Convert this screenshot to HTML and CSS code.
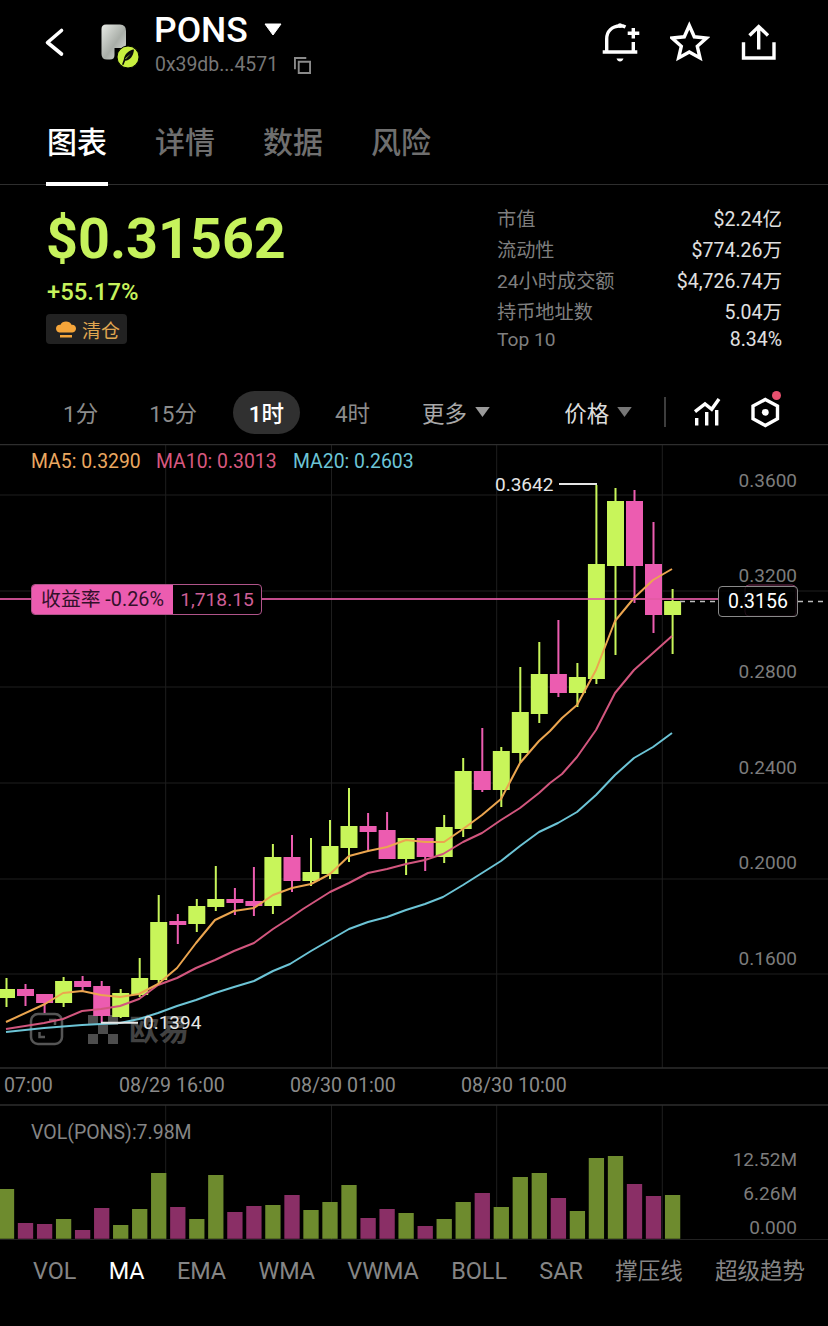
FILE: index.html
```html
<!DOCTYPE html>
<html lang="zh">
<head>
<meta charset="utf-8">
<title>PONS</title>
<link rel="stylesheet" href="styles.css">
</head>
<body>
<div class="app">
  <header class="topbar">
    <svg class="back" viewBox="40 24 28 36"><path d="M61.5 30.5L47.5 42.5L61.5 54"/></svg>
    <svg class="logo" viewBox="96 20 44 48">
      <defs><linearGradient id="lg" x1="0" y1="0" x2="1" y2="1"><stop offset="0" stop-color="#e8ebe6"/><stop offset=".55" stop-color="#a9aea8"/><stop offset="1" stop-color="#dfe2de"/></linearGradient></defs>
      <path class="logo-p" d="M106 24.500H120Q126 24.500 126 31V44Q126 48 122 48H114.500V55Q114.500 59.500 110 59.500H107Q101.500 59.500 101.500 54V29Q101.500 24.500 106 24.500Z"/>
      <circle class="logo-badge" cx="128" cy="57" r="11"/>
      <path class="logo-feather" d="M134 49.500C129 50 124.500 54 123.800 59.500L122 64.500L123.500 65L125.200 60.800C130 60.500 133.500 56 134 49.500ZM131 53.500L125.800 59L125.200 58.400Z"/>
    </svg>
    <div class="title">
      <div class="title-row"><span class="name">PONS</span><svg class="caret" viewBox="0 0 18 13"><path d="M1 1H17L9 12Z"/></svg></div>
      <div class="addr-row"><span class="addr">0x39db...4571</span>
        <svg class="copy" viewBox="0 0 18 18"><path d="M1 13V1H13M5 5H17V17H5Z"/></svg></div>
    </div>
    <div class="actions">
      <svg class="ico" viewBox="600 20 40 44"><path d="M606.700 52V39C606.700 31 612 26.500 620 25.800Q623 25.800 625.500 27M633.300 42V52M602.700 52H637.300M627.700 33.300H639.300M633.300 28V38.500"/><path class="fill" d="M616.500 58.500H623.500Q622.500 61.500 620 61.500Q617.500 61.500 616.500 58.500Z"/><circle class="fill" cx="620" cy="25.500" r="2.200"/></svg>
      <svg class="ico" viewBox="670 20 40 44"><path d="M689.300 25.500L694.300 36.800L706.500 38L697.300 46.300L700 58L689.300 52L678.600 58L681.300 46.300L672.100 38L684.300 36.800Z"/></svg>
      <svg class="ico" viewBox="740 20 40 44"><path d="M743.500 42.300V58H774V42.300M758.700 27V49.500M749.500 35.500L758.700 26.500L768 35.500"/></svg>
    </div>
  </header>

  <nav class="tabs">
    <a class="tab on">图表</a><a class="tab">详情</a><a class="tab">数据</a><a class="tab">风险</a>
  </nav>

  <section class="summary">
    <div class="price-col">
      <div class="price">$0.31562</div>
      <div class="chg">+55.17%</div>
      <div class="badge">
        <svg class="hat" viewBox="0 0 20 17"><path class="hat-top" d="M3.500 11.500C1 11 0 9 0 7.500C0 5 2 3.500 4.500 3.800C5.500 1.500 7.500 0.500 10 0.500C12.500 0.500 14.500 1.500 15.500 3.800C18 3.500 20 5 20 7.500C20 9 19 11 16.500 11.500Z"/><rect class="hat-top" x="4" y="14" width="12" height="2.500"/></svg>
        <span>清仓</span>
      </div>
    </div>
    <dl class="stats">
      <div class="stat"><dt>市值</dt><dd>$2.24亿</dd></div>
      <div class="stat"><dt>流动性</dt><dd>$774.26万</dd></div>
      <div class="stat"><dt>24小时成交额</dt><dd>$4,726.74万</dd></div>
      <div class="stat"><dt>持币地址数</dt><dd>5.04万</dd></div>
      <div class="stat last"><dt>Top 10</dt><dd>8.34%</dd></div>
    </dl>
  </section>

  <div class="periods">
    <span class="per p1">1分</span><span class="per p2">15分</span><span class="per pill">1时</span><span class="per p4">4时</span>
    <span class="per more">更多<svg class="tri" viewBox="0 0 16 11"><path d="M0 0H16L8 11Z"/></svg></span>
    <span class="per kind">价格<svg class="tri dim" viewBox="0 0 16 11"><path d="M0 0H16L8 11Z"/></svg></span>
    <i class="divider"></i>
    <svg class="tool t1" viewBox="692 396 30 32"><path d="M695 411.700L705 404L711.700 409.300L719 399M696.700 418V425.500M706.700 412V425.500M716.700 410V425.500"/></svg>
    <span class="hexwrap">
      <svg class="tool t2" viewBox="748 396 33 33"><path d="M764.300 399.500L776.500 406V418.700L764.300 425.500L752 418.700V406Z"/><circle class="fill" cx="764.300" cy="412.300" r="3.400"/></svg>
      <i class="dot"></i>
    </span>
  </div>

  <section class="chart">
    <svg class="plot" viewBox="0 444 828 796">
      <path class="grid" d="M0 495H828M0 591H828M0 687H828M0 783H828M0 879H828M0 974H828M165.700 444V1068M331.500 444V1068M496.700 444V1068M662.300 444V1068M165.700 1105V1240M331.500 1105V1240M496.700 1105V1240M662.300 1105V1240"/>
      <path class="rule" d="M0 444.500H828M0 1068H828M0 1105H828M0 1240H828"/>

      <g class="mark">
        <rect class="wm-box" x="31" y="1014" width="31" height="30" rx="7"/>
        <path class="wm-line" d="M39.500 1032V1037H45M49 1020H55V1025"/>
        <path class="wm-fill" d="M88 1015h10v10h-10zM108 1015h10v10h-10zM98 1024h10v10h-10zM88 1034h10v10h-10zM108 1034h10v10h-10z"/>
        <text class="wm-text" x="129" y="1040">欧易</text>
      </g>

      <path class="wick up" d="M6.500 978V1007M63.600 977V1007M120.700 989V1018M139.700 958V997M158.700 895V985M196.800 899V932M215.800 866V911M272.900 844V914M311 838V886M330 820V879M349 788V862M406.100 838V875M444.200 815V863M463.200 758V837M501.300 747V807M520.300 667V763M539.300 642V723M577.400 663V707M596.400 485V684M615.500 488V655M672.600 589V654"/>
      <path class="wick down" d="M25.500 984V1006M44.600 994V1013M82.600 976V991M101.700 981V1023M177.800 914V944M234.900 888V915M253.900 867V916M292 835V892M368.100 813V851M387.100 812V859M425.200 838V871M482.300 728V792M558.400 620V697M634.500 490V603M653.500 522V633"/>
      <path class="body up" d="M6.500 989V998M63.600 981V1003M120.700 993V1017M139.700 978V995M158.700 922V980M196.800 906V924M215.800 899V907M272.900 857V906M311 872V881M330 846V874M349 826V848M406.100 838V859M444.200 827V857M463.200 771V829M501.300 751V790M520.300 712V753M539.300 674V714M577.400 677V693M596.400 564V679M615.500 501V566M672.600 601V615"/>
      <path class="body down" d="M25.500 989V996M44.600 994V1003M82.600 981V987M101.700 986V1016M177.800 921V925M234.900 899V903M253.900 901V906M292 857V881M368.100 826V832M387.100 830V859M425.200 838V857M482.300 771V790M558.400 674V693M634.500 501V566M653.500 564V615"/>

      <path class="ma ma20" d="M6 1032L44 1028L82 1025L120 1023L139 1019L158 1013L177 1006L196 1000L215 993L234 987L254 981L273 971L290 964L311 951L330 940L349 929L368 922L387 917L406 910L425 904L443 897L463 885L482 873L501 861L520 846L539 832L558 823L577 812L596 795L615 775L634 758L653 747L672 733"/>
      <path class="ma ma10" d="M6 1029L44 1023L63 1019L82 1011L101 1009L120 1006L139 999L158 985L177 978L196 968L215 960L234 951L254 943L273 929L290 918L303 909L330 892L349 883L368 873L387 869L406 864L425 860L443 854L463 842L482 833L501 820L520 808L539 793L550 783L562 774L577 757L596 730L615 693L634 670L653 653L672 636"/>
      <path class="ma ma5" d="M6 1022L45 1004L63 993L82 991L101 995L120 997L139 994L158 984L177 968L196 943L215 920L234 911L254 908L273 895L292 888L311 884L330 874L349 856L368 851L387 847L406 840L425 842L444 842L463 829L482 815L501 799L520 763L539 741L550 731L562 718L577 705L596 670L615 621L634 598L653 580L672 569"/>

      <path class="last-line" d="M0 599H718"/>
      <path class="last-dash" d="M680 601.500H718M798 601.500H828"/>
      <rect class="ghost" x="745" y="585" width="51" height="31" rx="4"/>

      <path class="ext" d="M559 484H597M101 1022.700H138"/>
      <text class="ext-t" x="495" y="491">0.3642</text>
      <text class="ext-t" x="143" y="1029">0.1394</text>

      <text class="axis" x="797" y="487">0.3600</text>
      <text class="axis" x="797" y="582">0.3200</text>
      <text class="axis" x="797" y="678">0.2800</text>
      <text class="axis" x="797" y="774">0.2400</text>
      <text class="axis" x="797" y="869">0.2000</text>
      <text class="axis" x="797" y="965">0.1600</text>

      <text class="t-l" x="4" y="1092">07:00</text>
      <text class="t-l" x="119" y="1092">08/29 16:00</text>
      <text class="t-l" x="290" y="1092">08/30 01:00</text>
      <text class="t-l" x="461" y="1092">08/30 10:00</text>

      <text class="legend" y="468"><tspan class="c5" x="31">MA5: 0.3290</tspan><tspan class="c10" x="156">MA10: 0.3013</tspan><tspan class="c20" x="293">MA20: 0.2603</tspan></text>

      <text class="vol-t" x="31" y="1139">VOL(PONS):7.98M</text>
      <text class="axis" x="797" y="1166">12.52M</text>
      <text class="axis" x="797" y="1200">6.26M</text>
      <text class="axis" x="797" y="1234">0.000</text>

      <path class="vol vup" d="M6.500 1189V1238.700M63.600 1219V1238.700M120.700 1225V1238.700M139.700 1209V1238.700M158.700 1173V1238.700M196.800 1219V1238.700M215.800 1175V1238.700M272.900 1205V1238.700M311 1210V1238.700M330 1202V1238.700M349 1185V1238.700M406.100 1213V1238.700M444.200 1219V1238.700M463.200 1202V1238.700M501.300 1207V1238.700M520.300 1177V1238.700M539.300 1173V1238.700M577.400 1211V1238.700M596.400 1158V1238.700M615.500 1156V1238.700M672.600 1195V1238.700"/>
      <path class="vol vdown" d="M25.500 1223V1238.700M44.600 1224V1238.700M82.600 1230V1238.700M101.700 1208V1238.700M177.800 1207V1238.700M234.900 1212V1238.700M253.900 1206V1238.700M292 1195V1238.700M368.100 1218V1238.700M387.100 1209V1238.700M425.200 1226V1238.700M482.300 1193V1238.700M558.400 1198V1238.700M634.500 1184V1238.700M653.500 1196V1238.700"/>
    </svg>

    <div class="pnl"><span class="pnl-a">收益率 -0.26%</span><span class="pnl-b">1,718.15</span></div>
    <div class="last-tag">0.3156</div>
  </section>

  <nav class="inds">
    <span>VOL</span><span class="on">MA</span><span>EMA</span><span>WMA</span><span>VWMA</span><span>BOLL</span><span>SAR</span><span class="cjk">撑压线</span><span class="cjk">超级趋势</span>
  </nav>
</div>
</body>
</html>
```

FILE: styles.css
```css
* { box-sizing: border-box; }
html, body { margin: 0; padding: 0; background: #000; }
body { font-family: Roboto, "Noto Sans CJK SC", sans-serif; color: #fff; }
.app { width: 828px; height: 1326px; overflow: hidden; background: #000; display: flex; flex-direction: column; }

/* top bar */
.topbar { height: 88px; flex: none; display: flex; align-items: flex-start; padding: 20px 48px 0 40px; }
.back { width: 28px; height: 36px; margin-top: 4px; flex: none; }
.back path { fill: none; stroke: #fff; stroke-width: 3.6; stroke-linecap: round; stroke-linejoin: round; }
.logo { width: 44px; height: 48px; margin-left: 28px; flex: none; }
.logo-p { fill: url(#lg); }
.logo-badge { fill: #c8ef3f; stroke: #000; stroke-width: 1; }
.logo-feather { fill: #0a0a0a; }
.title { margin-left: 15px; margin-top: -8px; }
.title-row { display: flex; align-items: center; height: 36px; }
.name { font-size: 35.500px; font-weight: 500; line-height: 36px; margin-left: -1px; }
.caret { width: 18px; height: 13px; margin-left: 16px; margin-top: -2px; }
.caret path { fill: #fff; stroke: #fff; stroke-width: 1; stroke-linejoin: round; }
.addr-row { display: flex; align-items: center; height: 24px; margin-top: 5px; }
.addr { font-size: 19.400px; color: #777; line-height: 24px; }
.copy { width: 17px; height: 17px; margin-left: 16px; }
.copy path { fill: none; stroke: #8a8a8a; stroke-width: 2; }
.actions { margin-left: auto; display: flex; gap: 30px; }
.ico { width: 40px; height: 44px; flex: none; }
.ico path { fill: none; stroke: #fff; stroke-width: 3.4; stroke-linejoin: miter; }
.ico path.fill, .ico .fill { fill: #fff; stroke: none; }

/* tabs */
.tabs { height: 97px; flex: none; display: flex; gap: 48px; padding: 0 0 0 46px; border-bottom: 1px solid #2e2e2e; }
.tab { font-size: 30px; line-height: 38px; margin-top: 36px; height: 61px; color: #6f6f6f; width: 60px; text-align: center; font-weight: 500; position: relative; }
.tab.on { color: #fff; width: 62px; margin-right: -1px; }
.tab.on::after { content: ""; position: absolute; left: 0; right: 0; bottom: -1px; height: 4px; background: #fff; }

/* summary */
.summary { height: 205px; flex: none; display: flex; justify-content: space-between; padding: 0 46px; }
.price-col { display: flex; flex-direction: column; align-items: flex-start; }
.price { font-size: 55.700px; font-weight: 700; line-height: 64px; margin-top: 22px; color: #c6f25c; }
.chg { font-size: 23.800px; font-weight: 500; line-height: 28px; margin-top: 7px; margin-left: 1px; color: #c6f25c; }
.badge { margin-top: 8px; height: 30px; width: 81px; border-radius: 4px; background: #222; display: flex; align-items: center; padding-left: 10px; color: #e0a650; font-size: 19px; }
.hat { width: 20px; height: 17px; margin-right: 6px; }
.hat-top { fill: #f5a53a; }

.stats { margin: 19px 0 0; width: 285px; }
.stat { display: flex; justify-content: space-between; height: 31px; line-height: 31px; font-size: 19.500px; margin: 0; }
.stat.last { margin-top: -4px; }
.stat dt { color: #7f7f7f; font-size: 19.200px; }
.stat dd { margin: 0; color: #e0e0e0; }

/* periods */
.periods { height: 58px; flex: none; display: flex; align-items: center; font-size: 22.500px; color: #8c8c8c; margin-top: -4px; padding-bottom: 6px; }
.per { display: inline-flex; align-items: center; white-space: nowrap; }
.p1 { margin-left: 63px; }
.p2 { margin-left: 51px; }
.pill { margin-left: 36px; width: 67px; height: 43px; justify-content: center; background: #303030; border-radius: 22px; color: #fff; font-weight: 500; }
.p4 { margin-left: 35px; }
.more { margin-left: 52px; color: #a8a8a8; }
.kind { margin-left: 74px; color: #dcdcdc; }
.tri { width: 15px; height: 10px; margin-left: 8px; }
.tri path { fill: #9a9a9a; }
.tri.dim path { fill: #777; }
.divider { width: 2px; height: 30px; background: #3d3d3d; margin-left: 32px; }
.tool { flex: none; }
.tool path { fill: none; stroke: #fff; stroke-width: 3.4; stroke-linejoin: miter; }
.tool .fill { fill: #fff; }
.t1 { width: 30px; height: 32px; margin-left: 26px; }
.hexwrap { position: relative; margin-left: 27px; width: 33px; height: 33px; display: block; }
.t2 { width: 33px; height: 33px; display: block; }
.dot { position: absolute; width: 9px; height: 9px; border-radius: 50%; background: #e8506e; left: 23px; top: -5px; }

/* chart */
.chart { position: relative; height: 796px; flex: none; }
.plot { display: block; width: 828px; height: 796px; }
.plot text { font-family: Roboto, "Noto Sans CJK SC", sans-serif; }
.grid { fill: none; stroke: #1e1e1e; stroke-width: 1; }
.rule { fill: none; stroke: #2e2e2e; stroke-width: 1.500; }
.wick { fill: none; stroke-width: 2; }
.body { fill: none; stroke-width: 17; }
.up { stroke: #c8f55a; }
.down { stroke: #ec5cb0; }
.ma { fill: none; stroke-width: 2; stroke-linejoin: round; }
.ma5 { stroke: #eba54f; }
.ma10 { stroke: #d2567e; }
.ma20 { stroke: #6cc4d6; }
.last-line { stroke: #e45aa5; stroke-width: 2; opacity: .85; }
.last-dash { stroke: #bdbdbd; stroke-width: 1.500; stroke-dasharray: 5 5; fill: none; }
.ghost { fill: none; stroke: #7d3059; stroke-width: 1; }
.ext { fill: none; stroke: #e4e4e4; stroke-width: 2; }
.ext-t { font-size: 19px; fill: #e6e6e6; }
.axis { font-size: 19px; fill: #7c7c7c; text-anchor: end; }
.t-l { font-size: 19.600px; fill: #8a8a8a; }
.legend { font-size: 19.400px; }
.c5 { fill: #eba860; }
.c10 { fill: #d8587f; }
.c20 { fill: #6cc4d6; }
.vol-t { font-size: 19.500px; fill: #858585; }
.vol { fill: none; stroke-width: 15.300; }
.vup { stroke: #6e8b2e; }
.vdown { stroke: #8a2f66; }
.wm-box { fill: none; stroke: #555; stroke-width: 2.500; }
.wm-line { fill: none; stroke: #555; stroke-width: 2.500; }
.wm-fill { fill: #4d4d4d; }
.wm-text { font-size: 30px; font-weight: 700; fill: #424242; }

.pnl { position: absolute; left: 31px; top: 140px; width: 231px; height: 31px; display: flex; border: 1px solid #b0548a; border-radius: 4px; overflow: hidden; font-size: 19.800px; line-height: 29px; background: #000; }
.pnl-a { width: 141px; flex: none; background: #ec5cb0; color: #33102a; text-align: center; white-space: nowrap; }
.pnl-b { flex: 1; color: #cf5f97; text-align: center; font-size: 19.200px; }
.last-tag { position: absolute; left: 718px; top: 142px; width: 80px; height: 31px; border: 1px solid #8a8a8a; border-radius: 4px; font-size: 19.500px; line-height: 29px; text-align: center; color: #fff; background: rgba(0,0,0,.75); }

/* indicators */
.inds { flex: 1; display: flex; gap: 32.300px; padding: 12px 0 0 33px; font-size: 23.400px; line-height: 38px; color: #858585; white-space: nowrap; }
.inds .on { color: #fff; }
.inds .cjk { font-size: 22.500px; }
```
